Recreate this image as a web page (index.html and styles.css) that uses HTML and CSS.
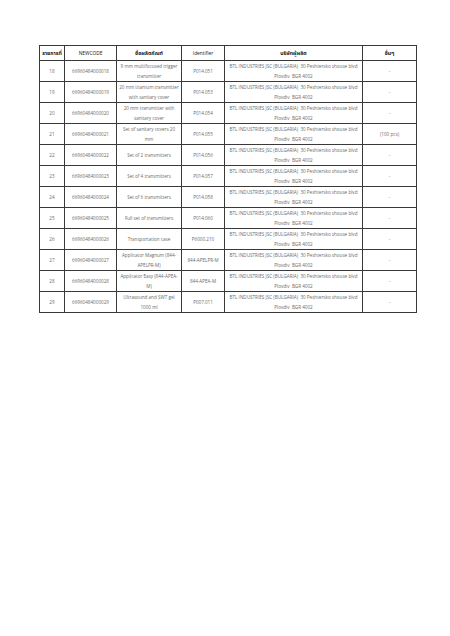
FILE: index.html
```html
<!DOCTYPE html>
<html lang="th">
<head>
<meta charset="utf-8">
<title>รายการสินค้า</title>
<link rel="stylesheet" href="styles.css">
</head>
<body>
<div class="page">
<table class="items">
<colgroup>
<col class="c-no"><col class="c-code"><col class="c-name"><col class="c-id"><col class="c-maker"><col class="c-other">
</colgroup>
<thead>
<tr><th>รายการที่</th><th class="latin">NEWCODE</th><th>ชื่อผลิตภัณฑ์</th><th class="latin">Identifier</th><th>บริษัทผู้ผลิต</th><th>อื่นๆ</th></tr>
</thead>
<tbody>
<tr><td>18</td><td>66960484000018</td><td>9 mm multifocused trigger transmitter</td><td>P014.051</td><td class="maker">BTL INDUSTRIES JSC (BULGARIA)&nbsp; 30 Peshtersko shouse blvd Plovdiv&nbsp; BGR 4002</td><td>-</td></tr>
<tr><td>19</td><td>66960484000019</td><td>20 mm titanium transmitter with sanitary cover</td><td>P014.053</td><td class="maker">BTL INDUSTRIES JSC (BULGARIA)&nbsp; 30 Peshtersko shouse blvd Plovdiv&nbsp; BGR 4002</td><td>-</td></tr>
<tr><td>20</td><td>66960484000020</td><td>20 mm transmitter with sanitary cover</td><td>P014.054</td><td class="maker">BTL INDUSTRIES JSC (BULGARIA)&nbsp; 30 Peshtersko shouse blvd Plovdiv&nbsp; BGR 4002</td><td>-</td></tr>
<tr><td>21</td><td>66960484000021</td><td>Set of sanitary covers 20 mm</td><td>P014.055</td><td class="maker">BTL INDUSTRIES JSC (BULGARIA)&nbsp; 30 Peshtersko shouse blvd Plovdiv&nbsp; BGR 4002</td><td>(100 pcs)</td></tr>
<tr><td>22</td><td>66960484000022</td><td>Set of 2 transmitters</td><td>P014.056</td><td class="maker">BTL INDUSTRIES JSC (BULGARIA)&nbsp; 30 Peshtersko shouse blvd Plovdiv&nbsp; BGR 4002</td><td>-</td></tr>
<tr><td>23</td><td>66960484000023</td><td>Set of 4 transmitters</td><td>P014.057</td><td class="maker">BTL INDUSTRIES JSC (BULGARIA)&nbsp; 30 Peshtersko shouse blvd Plovdiv&nbsp; BGR 4002</td><td>-</td></tr>
<tr><td>24</td><td>66960484000024</td><td>Set of 6 transmitters</td><td>P014.058</td><td class="maker">BTL INDUSTRIES JSC (BULGARIA)&nbsp; 30 Peshtersko shouse blvd Plovdiv&nbsp; BGR 4002</td><td>-</td></tr>
<tr><td>25</td><td>66960484000025</td><td>Full set of transmitters</td><td>P014.060</td><td class="maker">BTL INDUSTRIES JSC (BULGARIA)&nbsp; 30 Peshtersko shouse blvd Plovdiv&nbsp; BGR 4002</td><td>-</td></tr>
<tr><td>26</td><td>66960484000026</td><td>Transportation case</td><td>P6000.210</td><td class="maker">BTL INDUSTRIES JSC (BULGARIA)&nbsp; 30 Peshtersko shouse blvd Plovdiv&nbsp; BGR 4002</td><td>-</td></tr>
<tr><td>27</td><td>66960484000027</td><td>Applicator Magnum (844-APELPR-M)</td><td>844-APELPR-M</td><td class="maker">BTL INDUSTRIES JSC (BULGARIA)&nbsp; 30 Peshtersko shouse blvd Plovdiv&nbsp; BGR 4002</td><td>-</td></tr>
<tr><td>28</td><td>66960484000028</td><td>Applicator Easy (844-APEA-M)</td><td>844-APEA-M</td><td class="maker">BTL INDUSTRIES JSC (BULGARIA)&nbsp; 30 Peshtersko shouse blvd Plovdiv&nbsp; BGR 4002</td><td>-</td></tr>
<tr><td>29</td><td>66960484000029</td><td>Ultrasound and SWT gel 1000 ml</td><td>P007.011</td><td class="maker">BTL INDUSTRIES JSC (BULGARIA)&nbsp; 30 Peshtersko shouse blvd Plovdiv&nbsp; BGR 4002</td><td>-</td></tr>
</tbody>
</table>
</div>
</body>
</html>
```
FILE: styles.css
```css
html, body {
  margin: 0;
  padding: 0;
  background: #ffffff;
}
.page {
  width: 450px;
  height: 636px;
  padding: 45px 0 0 39px;
  box-sizing: border-box;
  font-family: "Open Sans", "Noto Sans Thai", "Noto Sans", sans-serif;
}
.items {
  border-collapse: collapse;
  table-layout: fixed;
  width: 377px;
  font-size: 4.6px;
  line-height: 10px;
  color: #6a6a6a;
}
.c-no { width: 25px; }
.c-code { width: 52px; }
.c-name { width: 65px; }
.c-id { width: 43px; }
.c-maker { width: 138px; }
.c-other { width: 54px; }
.items th, .items td {
  border: 1px solid #3a3a3a;
  padding: 0 2px;
  text-align: center;
  vertical-align: middle;
  overflow: hidden;
}
.items thead tr { height: 15px; }
.items th {
  color: #111111;
  font-weight: 700;
  font-size: 5.2px;
  line-height: 8px;
}
.items th.latin {
  font-weight: 400;
  font-size: 4.8px;
}
.items tbody tr { height: 20px; }
.items td.maker {
  vertical-align: top;
  padding: 0 1px;
}
```
